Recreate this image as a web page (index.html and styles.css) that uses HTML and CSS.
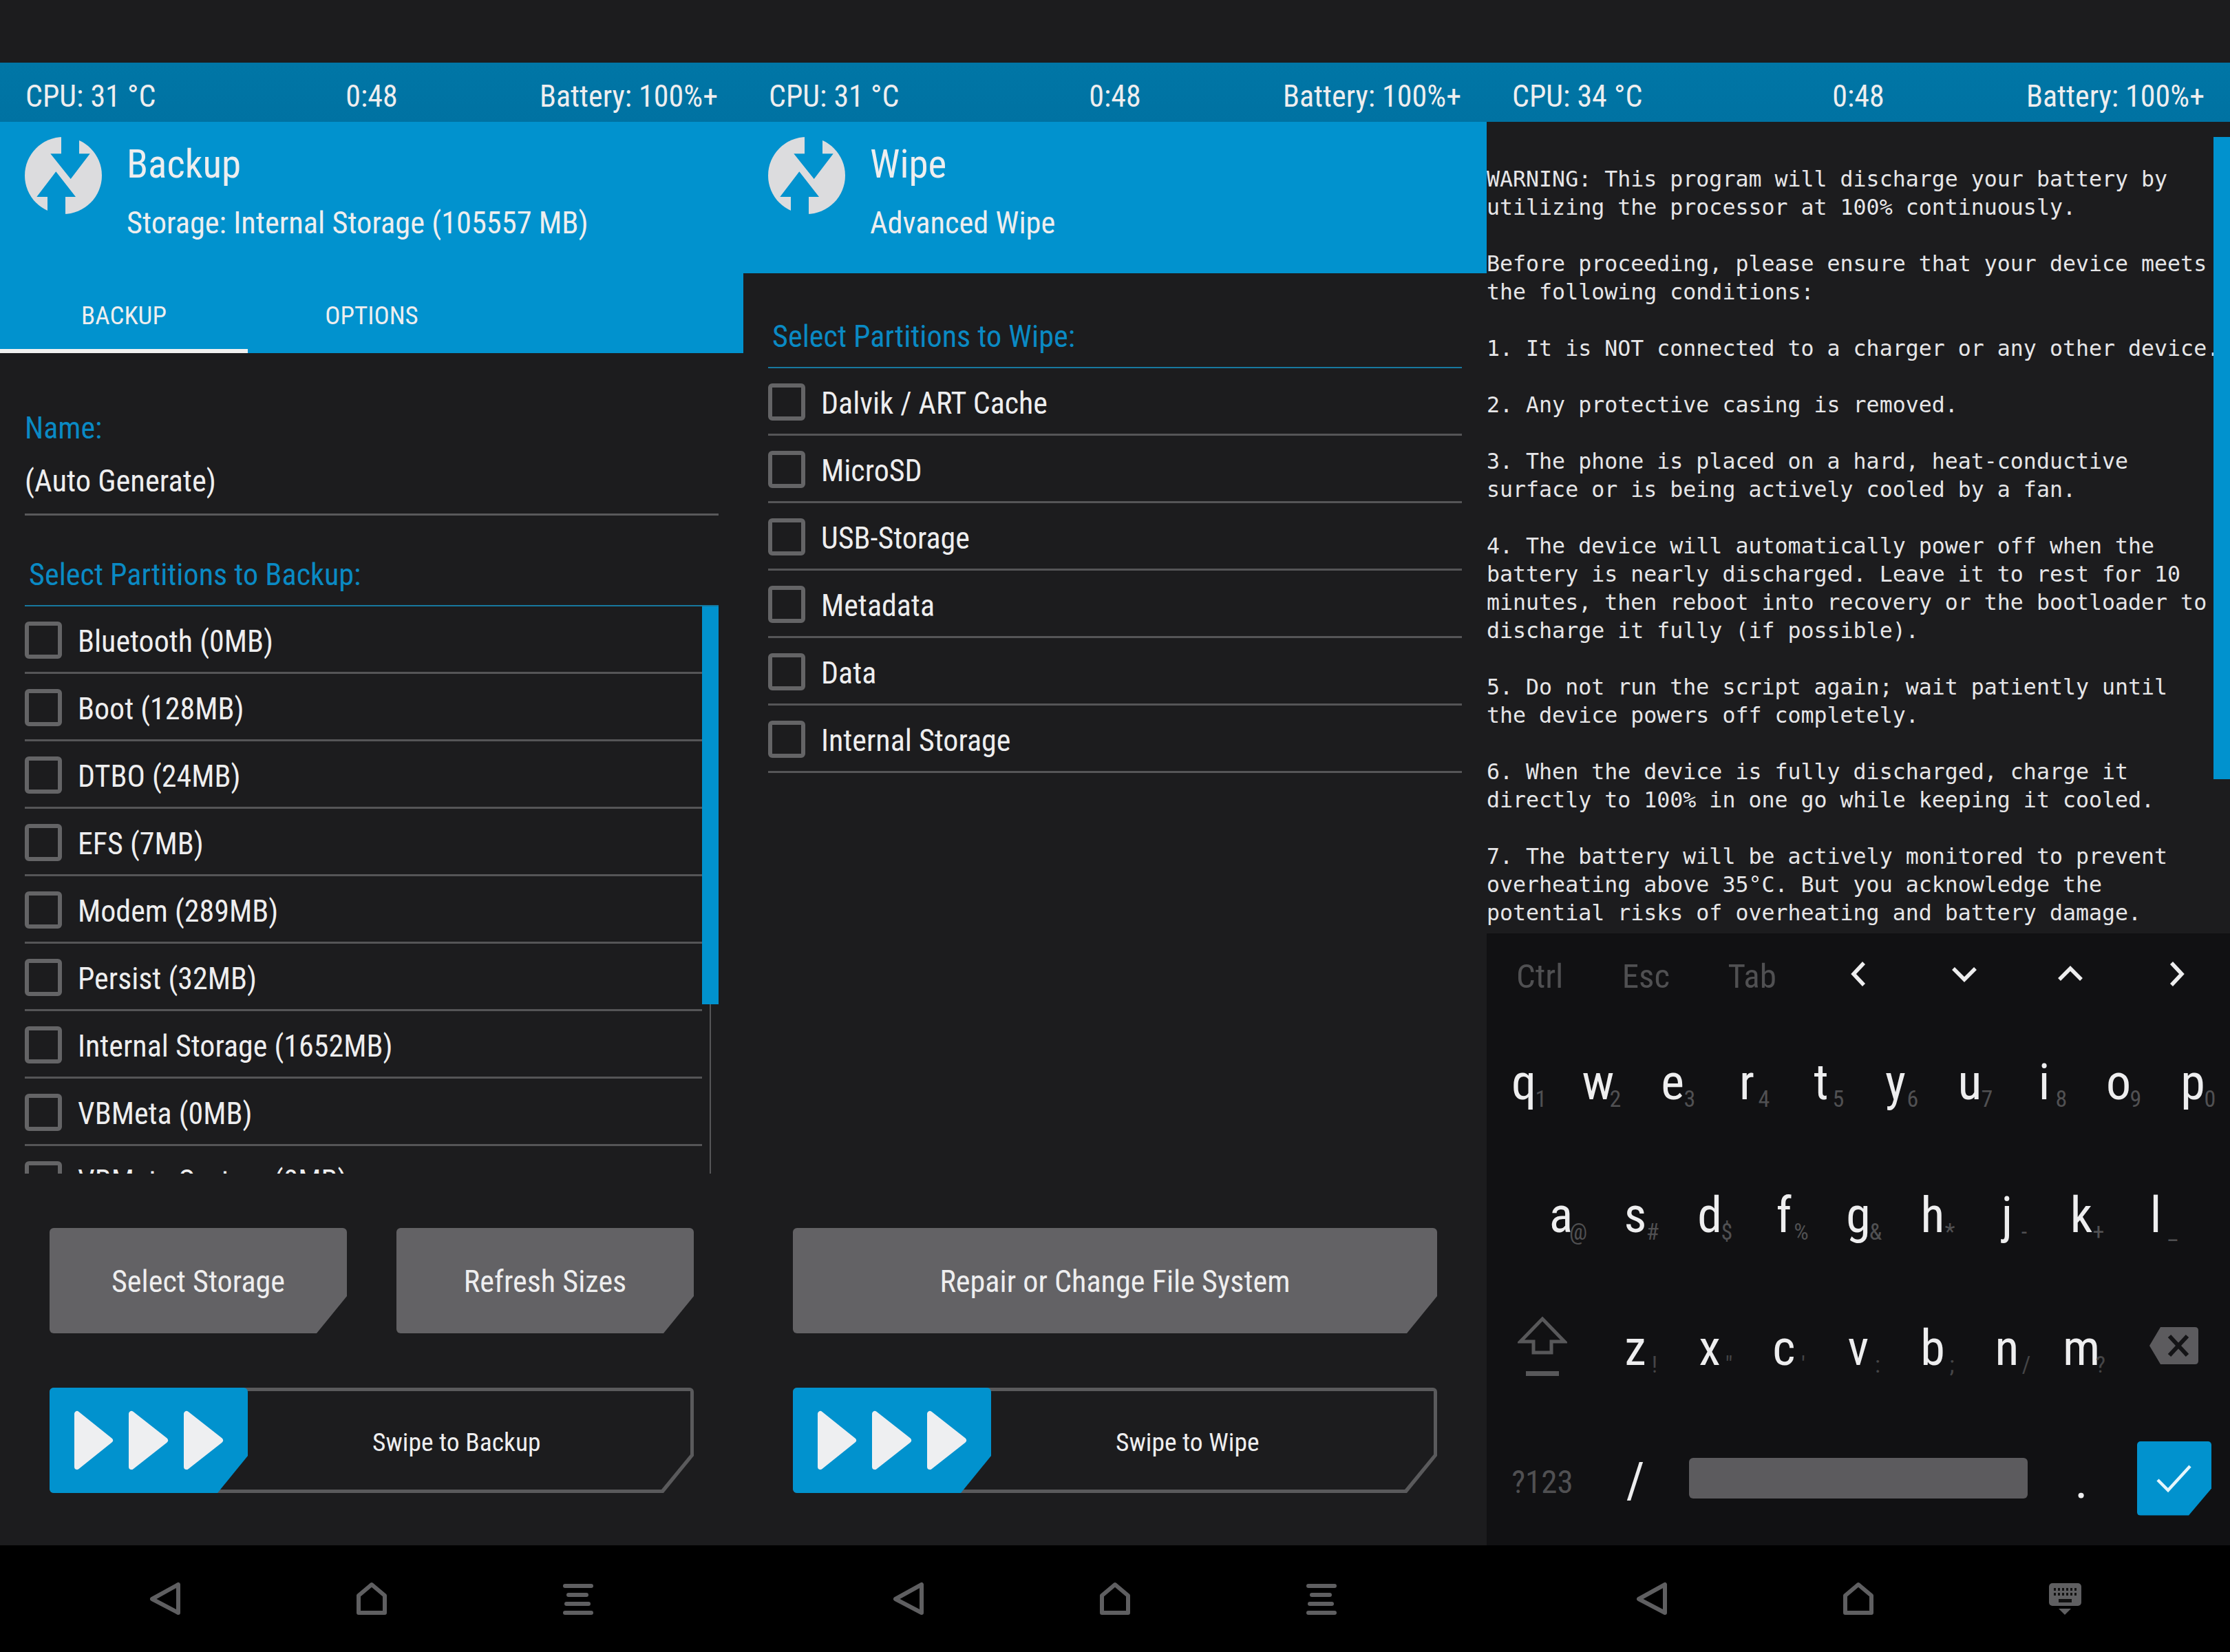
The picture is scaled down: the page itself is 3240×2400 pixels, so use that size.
FILE: index.html

```html
<!DOCTYPE html>
<html lang="en">
<head>
  <meta charset="UTF-8">
  <title>TWRP</title>
  <link rel="stylesheet" href="styles.css">
</head>
<body>
  <div class="topgap"></div>
  <div class="panels">

    <!-- backup screen -->
    <section class="panel">
      <div class="status">
        <span class="txt">CPU: 31 °C</span>
        <span class="txt">0:48</span>
        <span class="txt end">Battery: 100%+</span>
      </div>
      <header class="head">
        <div class="head-top">
          <svg class="logo" viewBox="0 0 112 112"><circle cx="56" cy="56" r="56" fill="#dcdcde"/><polygon fill="#0192ce" points="53,-2 79,-2 79,24.3 94.7,24.3 66.7,61 37.3,24.3 53,24.3"/><polygon fill="#0192ce" points="33,114 59,114 59,87 74,87 45.3,50.3 17.3,87 33,87"/></svg>
          <div class="titles">
            <h1 class="title"><span class="txt">Backup</span></h1>
            <p class="sub-title"><span class="txt">Storage: Internal Storage (105557 MB)</span></p>
          </div>
        </div>
        <div class="tabs">
          <div class="tab active"><span class="txt">BACKUP</span></div>
          <div class="tab"><span class="txt">OPTIONS</span></div>
        </div>
      </header>
      <div class="body">
        <div class="name-field">
          <div class="label"><span class="txt">Name:</span></div>
          <div class="value"><span class="txt">(Auto Generate)</span></div>
        </div>
        <div class="list-title"><span class="txt">Select Partitions to Backup:</span></div>
        <div class="list list-scroll">
          <div class="row"><span class="check"></span><span class="txt">Bluetooth (0MB)</span></div>
          <div class="row"><span class="check"></span><span class="txt">Boot (128MB)</span></div>
          <div class="row"><span class="check"></span><span class="txt">DTBO (24MB)</span></div>
          <div class="row"><span class="check"></span><span class="txt">EFS (7MB)</span></div>
          <div class="row"><span class="check"></span><span class="txt">Modem (289MB)</span></div>
          <div class="row"><span class="check"></span><span class="txt">Persist (32MB)</span></div>
          <div class="row"><span class="check"></span><span class="txt">Internal Storage (1652MB)</span></div>
          <div class="row"><span class="check"></span><span class="txt">VBMeta (0MB)</span></div>
          <div class="row"><span class="check"></span><span class="txt">VBMeta System (0MB)</span></div>
          <div class="track"><div class="thumb"></div></div>
        </div>
        <div class="actions">
          <div class="btns">
            <div class="btn"><span class="txt">Select Storage</span></div>
            <div class="btn"><span class="txt">Refresh Sizes</span></div>
          </div>
          <div class="swipe">
            <div class="swipe-inner"><span class="txt swipe-text">Swipe to Backup</span></div>
            <div class="handle">
              <svg viewBox="0 0 288 153" width="288" height="153"><polygon class="arrow" points="40,38 40,115 88,76.5"/><polygon class="arrow" points="119,38 119,115 168,76.5"/><polygon class="arrow" points="199,38 199,115 248,76.5"/></svg>
            </div>
          </div>
        </div>
      </div>
      <nav class="nav">
        <span class="nav-slot"><svg width="46" height="49" viewBox="0 0 46 49"><polygon class="nav-line" points="42,4 42,45 4,25"/></svg></span>
        <span class="nav-slot"><svg width="46" height="49" viewBox="0 0 46 49"><polygon class="nav-line" points="4,45 4,20 23,4 42,20 42,45"/></svg></span>
        <span class="nav-slot"><svg width="46" height="46" viewBox="0 0 46 46"><rect class="nav-fill" x="1" y="1" width="44" height="6" rx="3"/><rect class="nav-fill" x="6" y="14" width="32" height="6" rx="3"/><rect class="nav-fill" x="3" y="27" width="38" height="6" rx="3"/><rect class="nav-fill" x="1" y="40" width="44" height="6" rx="3"/></svg></span>
      </nav>
    </section>

    <!-- wipe screen -->
    <section class="panel">
      <div class="status">
        <span class="txt">CPU: 31 °C</span>
        <span class="txt">0:48</span>
        <span class="txt end">Battery: 100%+</span>
      </div>
      <header class="head">
        <div class="head-top">
          <svg class="logo" viewBox="0 0 112 112"><circle cx="56" cy="56" r="56" fill="#dcdcde"/><polygon fill="#0192ce" points="53,-2 79,-2 79,24.3 94.7,24.3 66.7,61 37.3,24.3 53,24.3"/><polygon fill="#0192ce" points="33,114 59,114 59,87 74,87 45.3,50.3 17.3,87 33,87"/></svg>
          <div class="titles">
            <h1 class="title"><span class="txt">Wipe</span></h1>
            <p class="sub-title"><span class="txt">Advanced Wipe</span></p>
          </div>
        </div>
      </header>
      <div class="body">
        <div class="list-title wipe-title"><span class="txt">Select Partitions to Wipe:</span></div>
        <div class="list">
          <div class="row"><span class="check"></span><span class="txt">Dalvik / ART Cache</span></div>
          <div class="row"><span class="check"></span><span class="txt">MicroSD</span></div>
          <div class="row"><span class="check"></span><span class="txt">USB-Storage</span></div>
          <div class="row"><span class="check"></span><span class="txt">Metadata</span></div>
          <div class="row"><span class="check"></span><span class="txt">Data</span></div>
          <div class="row"><span class="check"></span><span class="txt">Internal Storage</span></div>
        </div>
        <div class="actions">
          <div class="btns">
            <div class="btn"><span class="txt">Repair or Change File System</span></div>
          </div>
          <div class="swipe">
            <div class="swipe-inner"><span class="txt swipe-text">Swipe to Wipe</span></div>
            <div class="handle">
              <svg viewBox="0 0 288 153" width="288" height="153"><polygon class="arrow" points="40,38 40,115 88,76.5"/><polygon class="arrow" points="119,38 119,115 168,76.5"/><polygon class="arrow" points="199,38 199,115 248,76.5"/></svg>
            </div>
          </div>
        </div>
      </div>
      <nav class="nav">
        <span class="nav-slot"><svg width="46" height="49" viewBox="0 0 46 49"><polygon class="nav-line" points="42,4 42,45 4,25"/></svg></span>
        <span class="nav-slot"><svg width="46" height="49" viewBox="0 0 46 49"><polygon class="nav-line" points="4,45 4,20 23,4 42,20 42,45"/></svg></span>
        <span class="nav-slot"><svg width="46" height="46" viewBox="0 0 46 46"><rect class="nav-fill" x="1" y="1" width="44" height="6" rx="3"/><rect class="nav-fill" x="6" y="14" width="32" height="6" rx="3"/><rect class="nav-fill" x="3" y="27" width="38" height="6" rx="3"/><rect class="nav-fill" x="1" y="40" width="44" height="6" rx="3"/></svg></span>
      </nav>
    </section>

    <!-- terminal screen with keyboard -->
    <section class="panel">
      <div class="status">
        <span class="txt">CPU: 34 °C</span>
        <span class="txt">0:48</span>
        <span class="txt end">Battery: 100%+</span>
      </div>
      <div class="console">
<pre class="console-text">WARNING: This program will discharge your battery by
utilizing the processor at 100% continuously.

Before proceeding, please ensure that your device meets
the following conditions:

1. It is NOT connected to a charger or any other device.

2. Any protective casing is removed.

3. The phone is placed on a hard, heat-conductive
surface or is being actively cooled by a fan.

4. The device will automatically power off when the
battery is nearly discharged. Leave it to rest for 10
minutes, then reboot into recovery or the bootloader to
discharge it fully (if possible).

5. Do not run the script again; wait patiently until
the device powers off completely.

6. When the device is fully discharged, charge it
directly to 100% in one go while keeping it cooled.

7. The battery will be actively monitored to prevent
overheating above 35°C. But you acknowledge the
potential risks of overheating and battery damage.</pre>
        <div class="console-bar"></div>
      </div>
      <div class="keyboard">
        <div class="kb-row kb-fn">
          <span class="fn"><span class="txt">Ctrl</span></span>
          <span class="fn"><span class="txt">Esc</span></span>
          <span class="fn"><span class="txt">Tab</span></span>
          <span class="fn"><svg class="chev" width="26" height="38" viewBox="0 0 26 38"><polyline points="21,3 6,19 21,35"/></svg></span>
          <span class="fn"><svg class="chev" width="38" height="24" viewBox="0 0 38 24"><polyline points="3,4 19,20 35,4"/></svg></span>
          <span class="fn"><svg class="chev" width="38" height="24" viewBox="0 0 38 24"><polyline points="3,20 19,4 35,20"/></svg></span>
          <span class="fn"><svg class="chev" width="26" height="38" viewBox="0 0 26 38"><polyline points="5,3 20,19 5,35"/></svg></span>
        </div>
        <div class="kb-row">
          <span class="key"><span class="ltr">q</span><span class="hint">1</span></span>
          <span class="key"><span class="ltr">w</span><span class="hint">2</span></span>
          <span class="key"><span class="ltr">e</span><span class="hint">3</span></span>
          <span class="key"><span class="ltr">r</span><span class="hint">4</span></span>
          <span class="key"><span class="ltr">t</span><span class="hint">5</span></span>
          <span class="key"><span class="ltr">y</span><span class="hint">6</span></span>
          <span class="key"><span class="ltr">u</span><span class="hint">7</span></span>
          <span class="key"><span class="ltr">i</span><span class="hint">8</span></span>
          <span class="key"><span class="ltr">o</span><span class="hint">9</span></span>
          <span class="key"><span class="ltr">p</span><span class="hint">0</span></span>
        </div>
        <div class="kb-row kb-home">
          <span class="key"><span class="ltr">a</span><span class="hint">@</span></span>
          <span class="key"><span class="ltr">s</span><span class="hint">#</span></span>
          <span class="key"><span class="ltr">d</span><span class="hint">$</span></span>
          <span class="key"><span class="ltr">f</span><span class="hint">%</span></span>
          <span class="key"><span class="ltr">g</span><span class="hint">&amp;</span></span>
          <span class="key"><span class="ltr">h</span><span class="hint">*</span></span>
          <span class="key"><span class="ltr">j</span><span class="hint">-</span></span>
          <span class="key"><span class="ltr">k</span><span class="hint">+</span></span>
          <span class="key"><span class="ltr">l</span><span class="hint">_</span></span>
        </div>
        <div class="kb-row">
          <span class="key key-wide">
            <svg width="72" height="88" viewBox="0 0 72 88"><path class="shift" d="M36 4 L68 37 H49 V53 H23 V37 H4 Z"/><rect x="12" y="80" width="48" height="7" fill="#58585a"/></svg>
          </span>
          <span class="key"><span class="ltr">z</span><span class="hint dim">!</span></span>
          <span class="key"><span class="ltr">x</span><span class="hint dim">"</span></span>
          <span class="key"><span class="ltr">c</span><span class="hint dim">'</span></span>
          <span class="key"><span class="ltr">v</span><span class="hint dim">:</span></span>
          <span class="key"><span class="ltr">b</span><span class="hint dim">;</span></span>
          <span class="key"><span class="ltr">n</span><span class="hint dim">/</span></span>
          <span class="key"><span class="ltr">m</span><span class="hint dim">?</span></span>
          <span class="key key-wide">
            <svg class="bksp" width="72" height="56" viewBox="0 0 72 56"><path d="M16 1 H66 Q71 1 71 6 V50 Q71 55 66 55 H16 L0 28 Z" fill="#5c5b5e"/><path class="bk-x" d="M29 14 L55 42 M55 14 L29 42"/></svg>
          </span>
        </div>
        <div class="kb-row">
          <span class="key key-wide"><span class="txt alt">?123</span></span>
          <span class="key"><span class="ltr">/</span></span>
          <span class="key key-space"><span class="space"></span></span>
          <span class="key"><span class="ltr">.</span></span>
          <span class="key key-wide">
            <span class="enter"><svg width="108" height="108" viewBox="0 0 108 108"><polyline class="tick" points="30,56 45,71 77,36"/></svg></span>
          </span>
        </div>
      </div>
      <nav class="nav">
        <span class="nav-slot"><svg width="46" height="49" viewBox="0 0 46 49"><polygon class="nav-line" points="42,4 42,45 4,25"/></svg></span>
        <span class="nav-slot"><svg width="46" height="49" viewBox="0 0 46 49"><polygon class="nav-line" points="4,45 4,20 23,4 42,20 42,45"/></svg></span>
        <span class="nav-slot"><svg width="47" height="46" viewBox="0 0 47 46">
          <rect class="nav-fill" x="0" y="0" width="47" height="33" rx="5"/>
          <path d="M7 7h3v4h-3zM13 7h3v4h-3zM19 7h3v4h-3zM25 7h3v4h-3zM31 7h3v4h-3zM37 7h3v4h-3zM7 14h3v4h-3zM13 14h3v4h-3zM19 14h3v4h-3zM25 14h3v4h-3zM31 14h3v4h-3zM37 14h3v4h-3zM14 23h19v5h-19z" fill="#111"/>
          <polygon class="nav-fill" points="14,37 32,37 23,46"/>
        </svg></span>
      </nav>
    </section>
  </div>
</body>
</html>
```

FILE: styles.css

```css
* {
  box-sizing: border-box;
}
html, body {
  margin: 0;
  padding: 0;
}
body {
  width: 3240px;
  height: 2400px;
  overflow: hidden;
  background: #1c1c1e;
  color: #eeeeef;
  font-family: "Roboto", "Liberation Sans", sans-serif;
  font-stretch: condensed;
}
h1, p {
  margin: 0;
  font-weight: 400;
}

.txt {
  display: inline-block;
  white-space: nowrap;
}

.topgap {
  height: 91px;
}
.panels {
  display: flex;
  height: 2309px;
}
.panel {
  width: 1080px;
  display: flex;
  flex-direction: column;
}

.status {
  height: 86px;
  padding: 12px 37px 0;
  display: grid;
  grid-template-columns: 1fr auto 1fr;
  align-items: center;
  font-size: 44px;
  line-height: 50px;
  background: linear-gradient(#0076a6, #0072a2);
}
.status .end {
  justify-self: end;
}

.head {
  background: #0192ce;
}
.head-top {
  height: 220px;
  padding: 22px 0 0 36px;
  display: flex;
  gap: 36px;
}
.logo {
  width: 112px;
  height: 112px;
  flex: none;
}
.titles {
  padding-top: 7px;
}
.title {
  font-size: 57px;
  line-height: 66px;
}
.sub-title {
  margin-top: 26px;
  font-size: 44.4px;
  line-height: 52px;
}
.tabs {
  display: flex;
}
.tab {
  width: 360px;
  height: 116px;
  padding-top: 13px;
  display: flex;
  align-items: center;
  justify-content: center;
  font-size: 37px;
  border-bottom: 6px solid transparent;
}
.tab.active {
  border-bottom-color: #f0f0f0;
}

.body {
  flex: 1;
  display: flex;
  flex-direction: column;
  min-height: 0;
}
.name-field {
  margin: 84px 36px 0;
  padding-bottom: 22px;
  border-bottom: 3px solid #59595b;
}
.label {
  font-size: 44px;
  line-height: 50px;
  color: #0a8ac4;
}
.value {
  margin-top: 27px;
  font-size: 44.5px;
  line-height: 50px;
}
.list-title {
  margin: 61px 0 19px 42px;
  font-size: 44.2px;
  line-height: 50px;
  color: #0a8ac4;
}
.wipe-title {
  margin-top: 67px;
}

.list {
  margin: 0 36px;
  border-top: 2px solid #17789f;
}
.list-scroll {
  height: 826px;
  overflow: hidden;
  position: relative;
  padding-right: 24px;
}
.row {
  height: 98px;
  padding-top: 22px;
  display: flex;
  align-items: flex-start;
  gap: 23px;
  font-size: 44px;
  line-height: 59px;
  border-bottom: 3px solid #555557;
}
.check {
  width: 54px;
  height: 54px;
  flex: none;
  border: 6px solid #646466;
  border-radius: 6px;
}
.track {
  position: absolute;
  top: 0;
  right: 11px;
  bottom: 0;
  width: 2px;
  background: #555557;
}
.thumb {
  position: absolute;
  top: 0;
  right: -11px;
  width: 24px;
  height: 578px;
  background: #0192ce;
}

.actions {
  margin-top: auto;
  padding: 0 72px 76px;
}
.btns {
  display: flex;
  gap: 72px;
  margin-bottom: 79px;
}
.btn {
  flex: 1;
  height: 153px;
  padding-top: 2px;
  display: flex;
  align-items: center;
  justify-content: center;
  font-size: 44.2px;
  background: #636265;
  border-radius: 6px;
  clip-path: polygon(0 0, 100% 0, 100% calc(100% - 54px), calc(100% - 44px) 100%, 0 100%);
}
.swipe {
  position: relative;
  height: 153px;
  background: #5a5a5c;
  border-radius: 6px;
  clip-path: polygon(0 0, 100% 0, 100% calc(100% - 54px), calc(100% - 44px) 100%, 0 100%);
}
.swipe-inner {
  position: absolute;
  inset: 5px;
  padding-left: 464px;
  display: flex;
  align-items: center;
  background: #1c1c1e;
  font-size: 37.5px;
  clip-path: polygon(0 0, 100% 0, 100% calc(100% - 51px), calc(100% - 42px) 100%, 0 100%);
}
.swipe-text {
  margin-top: 4px;
}
.handle {
  position: absolute;
  top: 0;
  left: 0;
  width: 288px;
  height: 153px;
  background: #0192ce;
  border-radius: 6px;
  clip-path: polygon(0 0, 100% 0, 100% calc(100% - 54px), calc(100% - 44px) 100%, 0 100%);
}
.handle svg {
  display: block;
}
.arrow {
  fill: #eeeff1;
  stroke: #eeeff1;
  stroke-width: 8;
  stroke-linejoin: round;
}

.nav {
  height: 155px;
  flex: none;
  padding: 0 90px;
  display: flex;
  background: #000;
}
.nav-slot {
  width: 300px;
  display: flex;
  align-items: center;
  justify-content: center;
}
.nav-line {
  fill: none;
  stroke: #5f5f61;
  stroke-width: 6;
  stroke-linejoin: round;
}
.nav-fill {
  fill: #5f5f61;
}

.console {
  position: relative;
  height: 1179px;
  padding-top: 63px;
}
.console-text {
  margin: 0;
  height: 1104px;
  overflow: hidden;
  font-family: "DejaVu Sans Mono", monospace;
  font-stretch: normal;
  font-size: 31.6px;
  line-height: 41px;
  color: #e6e6e8;
}
.console-bar {
  position: absolute;
  top: 22px;
  right: 0;
  width: 24px;
  height: 933px;
  background: #0192ce;
}

.keyboard {
  flex: 1;
  background: #111113;
}
.kb-row {
  height: 193px;
  display: flex;
}
.kb-fn {
  height: 117px;
}
.kb-home {
  padding-left: 54px;
}
.fn {
  width: 154.28px;
  display: flex;
  align-items: center;
  justify-content: center;
  font-size: 49px;
  color: #505052;
}
.fn .txt {
  margin-top: 8px;
}
.chev {
  fill: none;
  stroke: #eeeeef;
  stroke-width: 5.5;
}
.key {
  position: relative;
  width: 108px;
  display: flex;
  align-items: center;
  justify-content: center;
}
.key-wide {
  width: 162px;
}
.key-space {
  width: 540px;
}
.ltr {
  display: inline-block;
  margin-top: 6px;
  font-size: 72px;
  line-height: 66px;
}
.hint {
  position: absolute;
  top: 106px;
  left: 58px;
  width: 42px;
  text-align: center;
  font-size: 34px;
  line-height: 34px;
  color: #505052;
}
.hint.dim {
  left: 61px;
  color: #454547;
}
.alt {
  margin-top: 8px;
  font-size: 47px;
  color: #505052;
}
.shift {
  fill: none;
  stroke: #58585a;
  stroke-width: 5;
}
.bksp {
  margin-top: -2px;
}
.bk-x {
  fill: none;
  stroke: #141416;
  stroke-width: 6;
}
.space {
  width: 492px;
  height: 59px;
  margin-top: -2px;
  background: #5c5b5e;
  border-radius: 6px;
}
.enter {
  width: 108px;
  height: 108px;
  margin-top: -2px;
  background: #0192ce;
  border-radius: 5px;
  clip-path: polygon(0 0, 100% 0, 100% calc(100% - 39px), calc(100% - 33px) 100%, 0 100%);
}
.enter svg {
  display: block;
}
.tick {
  fill: none;
  stroke: #e6f6fc;
  stroke-width: 4.5;
}
```
